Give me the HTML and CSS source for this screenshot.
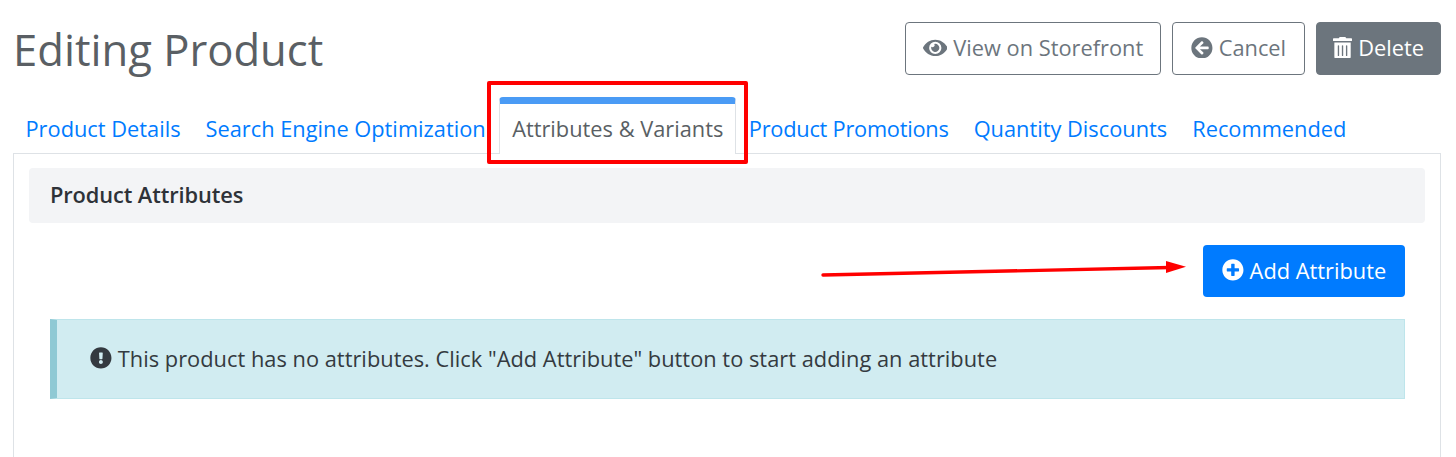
FILE: index.html
```html
<!DOCTYPE html>
<html lang="en">
<head>
    <meta charset="UTF-8">
    <title>Editing Product</title>
    <link rel="stylesheet" href="styles.css">
</head>
<body>
    <div class="top">
        <h1 class="title">Editing Product</h1>
        <div class="actions">
            <a class="btn btn-outline btn-view">
                <svg class="icon icon-eye" viewBox="0 0 576 512"><path d="M572.52 241.4C518.29 135.59 410.93 64 288 64S57.68 135.64 3.48 241.41a32.35 32.35 0 0 0 0 29.19C57.71 376.41 165.07 448 288 448s230.32-71.64 284.52-177.41a32.35 32.35 0 0 0 0-29.19zM288 400a144 144 0 1 1 144-144 143.93 143.93 0 0 1-144 144zm0-240a95.31 95.31 0 0 0-25.31 3.79 47.85 47.85 0 0 1-66.9 66.9A95.78 95.78 0 1 0 288 160z"/></svg>
                View on Storefront
            </a>
            <a class="btn btn-outline btn-cancel">
                <svg class="icon" viewBox="0 0 512 512"><path d="M256 504C119 504 8 393 8 256S119 8 256 8s248 111 248 248-111 248-248 248zm28.9-143.6L209.4 288H392c13.3 0 24-10.7 24-24v-16c0-13.3-10.7-24-24-24H209.4l75.5-72.4c9.7-9.3 9.9-24.8.4-34.3l-11-10.9c-9.4-9.4-24.6-9.4-33.9 0L107.7 239c-9.4 9.4-9.4 24.6 0 33.9l132.7 132.7c9.4 9.4 24.6 9.4 33.9 0l11-10.9c9.5-9.5 9.3-25-.4-34.3z"/></svg>
                Cancel
            </a>
            <a class="btn btn-grey btn-delete">
                <svg class="icon icon-trash" viewBox="0 0 448 512"><path d="M32 464a48 48 0 0 0 48 48h288a48 48 0 0 0 48-48V128H32zm272-256a16 16 0 0 1 32 0v224a16 16 0 0 1-32 0zm-96 0a16 16 0 0 1 32 0v224a16 16 0 0 1-32 0zm-96 0a16 16 0 0 1 32 0v224a16 16 0 0 1-32 0zM432 32H312l-9.4-18.7A24 24 0 0 0 281.1 0H166.8a23.72 23.72 0 0 0-21.4 13.3L136 32H16A16 16 0 0 0 0 48v32a16 16 0 0 0 16 16h416a16 16 0 0 0 16-16V48a16 16 0 0 0-16-16z"/></svg>
                Delete
            </a>
        </div>
    </div>

    <ul class="tabs">
        <li class="tab">Product Details</li>
        <li class="tab">Search Engine Optimization</li>
        <li class="tab active">Attributes &amp; Variants</li>
        <li class="tab tab-tight">Product Promotions</li>
        <li class="tab">Quantity Discounts</li>
        <li class="tab">Recommended</li>
    </ul>

    <div class="panel">
        <div class="panel-heading">Product Attributes</div>
        <div class="panel-actions">
            <a class="btn btn-blue">
                <svg class="icon" viewBox="0 0 512 512"><path d="M256 8C119 8 8 119 8 256s111 248 248 248 248-111 248-248S393 8 256 8zm144 276c0 6.6-5.4 12-12 12h-92v92c0 6.6-5.4 12-12 12h-56c-6.6 0-12-5.4-12-12v-92h-92c-6.6 0-12-5.4-12-12v-56c0-6.6 5.4-12 12-12h92v-92c0-6.6 5.4-12 12-12h56c6.6 0 12 5.4 12 12v92h92c6.6 0 12 5.4 12 12v56z"/></svg>
                Add Attribute
            </a>
        </div>
        <div class="alert">
            <svg class="icon" viewBox="0 0 512 512"><path d="M504 256c0 136.997-111.043 248-248 248S8 392.997 8 256C8 119.083 119.043 8 256 8s248 111.083 248 248zm-248 50c-25.405 0-46 20.595-46 46s20.595 46 46 46 46-20.595 46-46-20.595-46-46-46zm-43.673-165.346l7.418 136c.347 6.364 5.609 11.346 11.982 11.346h48.546c6.373 0 11.635-4.982 11.982-11.346l7.418-136c.375-6.874-5.098-12.654-11.982-12.654h-63.383c-6.884 0-12.356 5.78-11.981 12.654z"/></svg>
            This product has no attributes. Click "Add Attribute" button to start adding an attribute
        </div>
    </div>

    <!-- annotations drawn over the screenshot -->
    <div class="callout"></div>
    <svg class="arrow" width="380" height="24" viewBox="0 0 380 24">
        <line x1="3" y1="17" x2="350" y2="9.5" stroke="#ff0000" stroke-width="3.4" stroke-linecap="round"/>
        <polygon points="346,3 366,8.7 346,15" fill="#ff0000"/>
    </svg>
</body>
</html>
```

FILE: styles.css
```css
* {
    box-sizing: border-box;
}
html, body {
    height: 457px;
    overflow: hidden;
}
body {
    font-family: 'Open Sans', sans-serif;
    font-size: 21.8px;
    margin: 0;
    padding: 22px 15px 0 13px;
    background: #fff;
    color: #212529;
    position: relative;
}
.icon {
    width: 1em;
    height: 1em;
    fill: currentColor;
    flex: none;
}
.icon-eye {
    width: 1.125em;
}
.icon-trash {
    width: 0.875em;
}
.top {
    display: flex;
    justify-content: space-between;
    align-items: flex-start;
    height: 75px;
}
.title {
    margin: 0;
    padding-top: 1px;
    font-size: 43.6px;
    font-weight: 400;
    line-height: 53px;
    color: #5a5f64;
}
.actions {
    display: flex;
    gap: 11px;
}
.btn {
    display: flex;
    align-items: center;
    justify-content: center;
    gap: 6px;
    height: 53px;
    padding-bottom: 2px;
    border-radius: 4px;
    border: 1px solid transparent;
    white-space: nowrap;
}
.btn-outline {
    border-color: #6c757d;
    color: #6c757d;
}
.btn-view {
    width: 256px;
}
.btn-cancel {
    width: 133px;
}
.btn-delete {
    width: 125px;
}
.btn-grey {
    background: #6c757d;
    border-color: #6c757d;
    color: #fff;
}
.btn-blue {
    background: #007bff;
    color: #fff;
    width: 202px;
    height: 52px;
}
.tabs {
    display: flex;
    list-style: none;
    margin: 0;
    padding: 0;
    height: 56px;
    position: relative;
    z-index: 1;
}
.tab {
    padding: 18px 12.5px 0;
    color: #007bff;
    line-height: 27px;
    white-space: nowrap;
}
.tab-tight {
    letter-spacing: -0.25px;
}
.tab.active {
    height: 57px;
    padding: 11px 12px 0;
    margin-left: 1px;
    background: #fff;
    color: #5a5f64;
    border: 1px solid #dee2e6;
    border-top: 7px solid #4a9bf5;
    border-bottom: 0;
    border-radius: 4px 4px 0 0;
}
.panel {
    height: 304px;
    padding: 14px 15px 0;
    border: 1px solid #dee2e6;
    border-bottom: 0;
}
.panel-heading {
    height: 55px;
    padding: 0 21px 2px;
    display: flex;
    align-items: center;
    background: #f3f4f6;
    border-radius: 4px;
    font-weight: 600;
    color: #2e3238;
    letter-spacing: -0.1px;
}
.panel-actions {
    display: flex;
    justify-content: flex-end;
    margin: 22px 20px 22px 0;
}
.alert {
    height: 80px;
    margin: 0 20px 0 21px;
    padding: 0 33px 2px;
    display: flex;
    align-items: center;
    gap: 6px;
    background: #d1ecf1;
    border: 1px solid #bee5eb;
    border-left: 7px solid #8fc9d4;
    color: #343a40;
    letter-spacing: 0.02px;
    white-space: nowrap;
}
.callout {
    position: absolute;
    left: 487px;
    top: 81px;
    width: 261px;
    height: 83px;
    border: 4px solid #ff0000;
    border-radius: 2px;
    z-index: 2;
}
.arrow {
    position: absolute;
    left: 820px;
    top: 258px;
    z-index: 2;
}
```
